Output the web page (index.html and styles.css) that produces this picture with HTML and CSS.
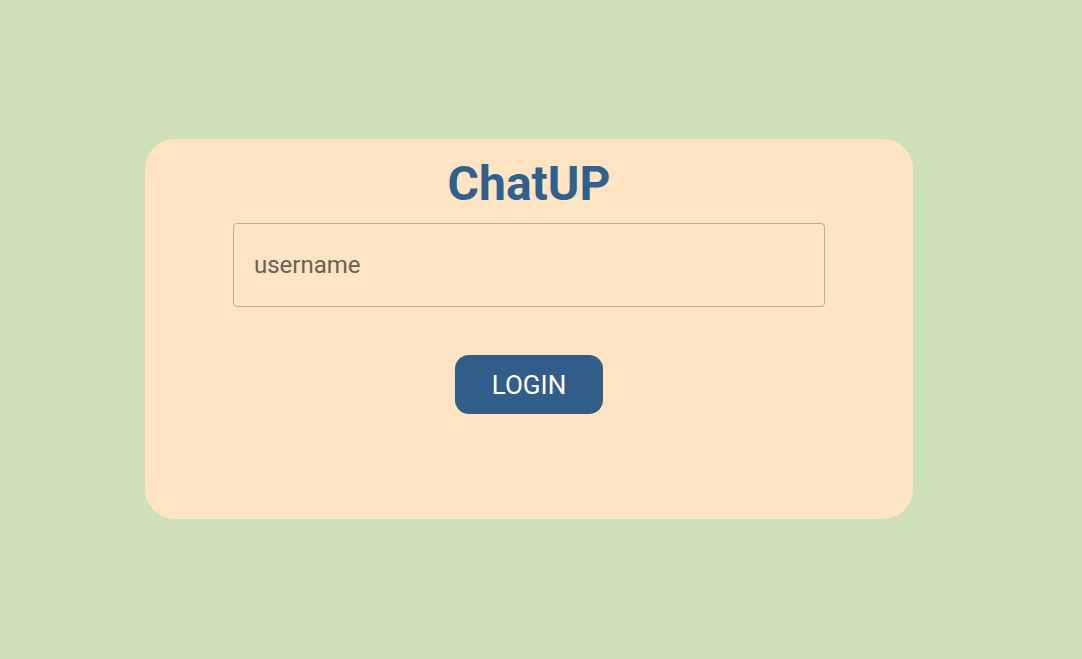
FILE: index.html
```html
<!DOCTYPE html>
<html lang="en">
<head>
<meta charset="utf-8">
<title>ChatUP</title>
<link rel="stylesheet" href="styles.css">
</head>
<body>
<main class="page">
  <section class="card">
    <h1 class="title">ChatUP</h1>
    <input class="username" type="text" placeholder="username">
    <button class="login" type="button">LOGIN</button>
  </section>
</main>
</body>
</html>
```
FILE: styles.css
```css
html, body {
  margin: 0;
  padding: 0;
  height: 100%;
}
body {
  background: #cee0b9;
  font-family: Roboto, "Liberation Sans", sans-serif;
}
.page {
  height: 100%;
  display: flex;
  align-items: flex-start;
  padding: 139px 0 0 145px;
  box-sizing: border-box;
}
.card {
  width: 768px;
  height: 380px;
  box-sizing: border-box;
  background: #ffe4c4;
  border-radius: 30px;
  display: flex;
  flex-direction: column;
  align-items: center;
  padding-top: 14px;
}
.title {
  margin: 0;
  font-size: 48px;
  font-weight: 700;
  line-height: 62px;
  color: #30608c;
}
.username {
  margin-top: 8px;
  width: 592px;
  height: 84px;
  box-sizing: border-box;
  border: 1px solid #c2aa94;
  border-radius: 4px;
  background: transparent;
  padding: 0 20px;
  font-family: Roboto, "Liberation Sans", sans-serif;
  font-size: 24px;
  color: #333;
  outline: none;
}
.username::placeholder {
  color: #6b6055;
  opacity: 1;
}
.login {
  margin-top: 48px;
  width: 148px;
  height: 59px;
  border: none;
  border-radius: 14px;
  background: #325d89;
  color: #fff;
  font-family: Roboto, "Liberation Sans", sans-serif;
  font-size: 26px;
  cursor: pointer;
}
```
